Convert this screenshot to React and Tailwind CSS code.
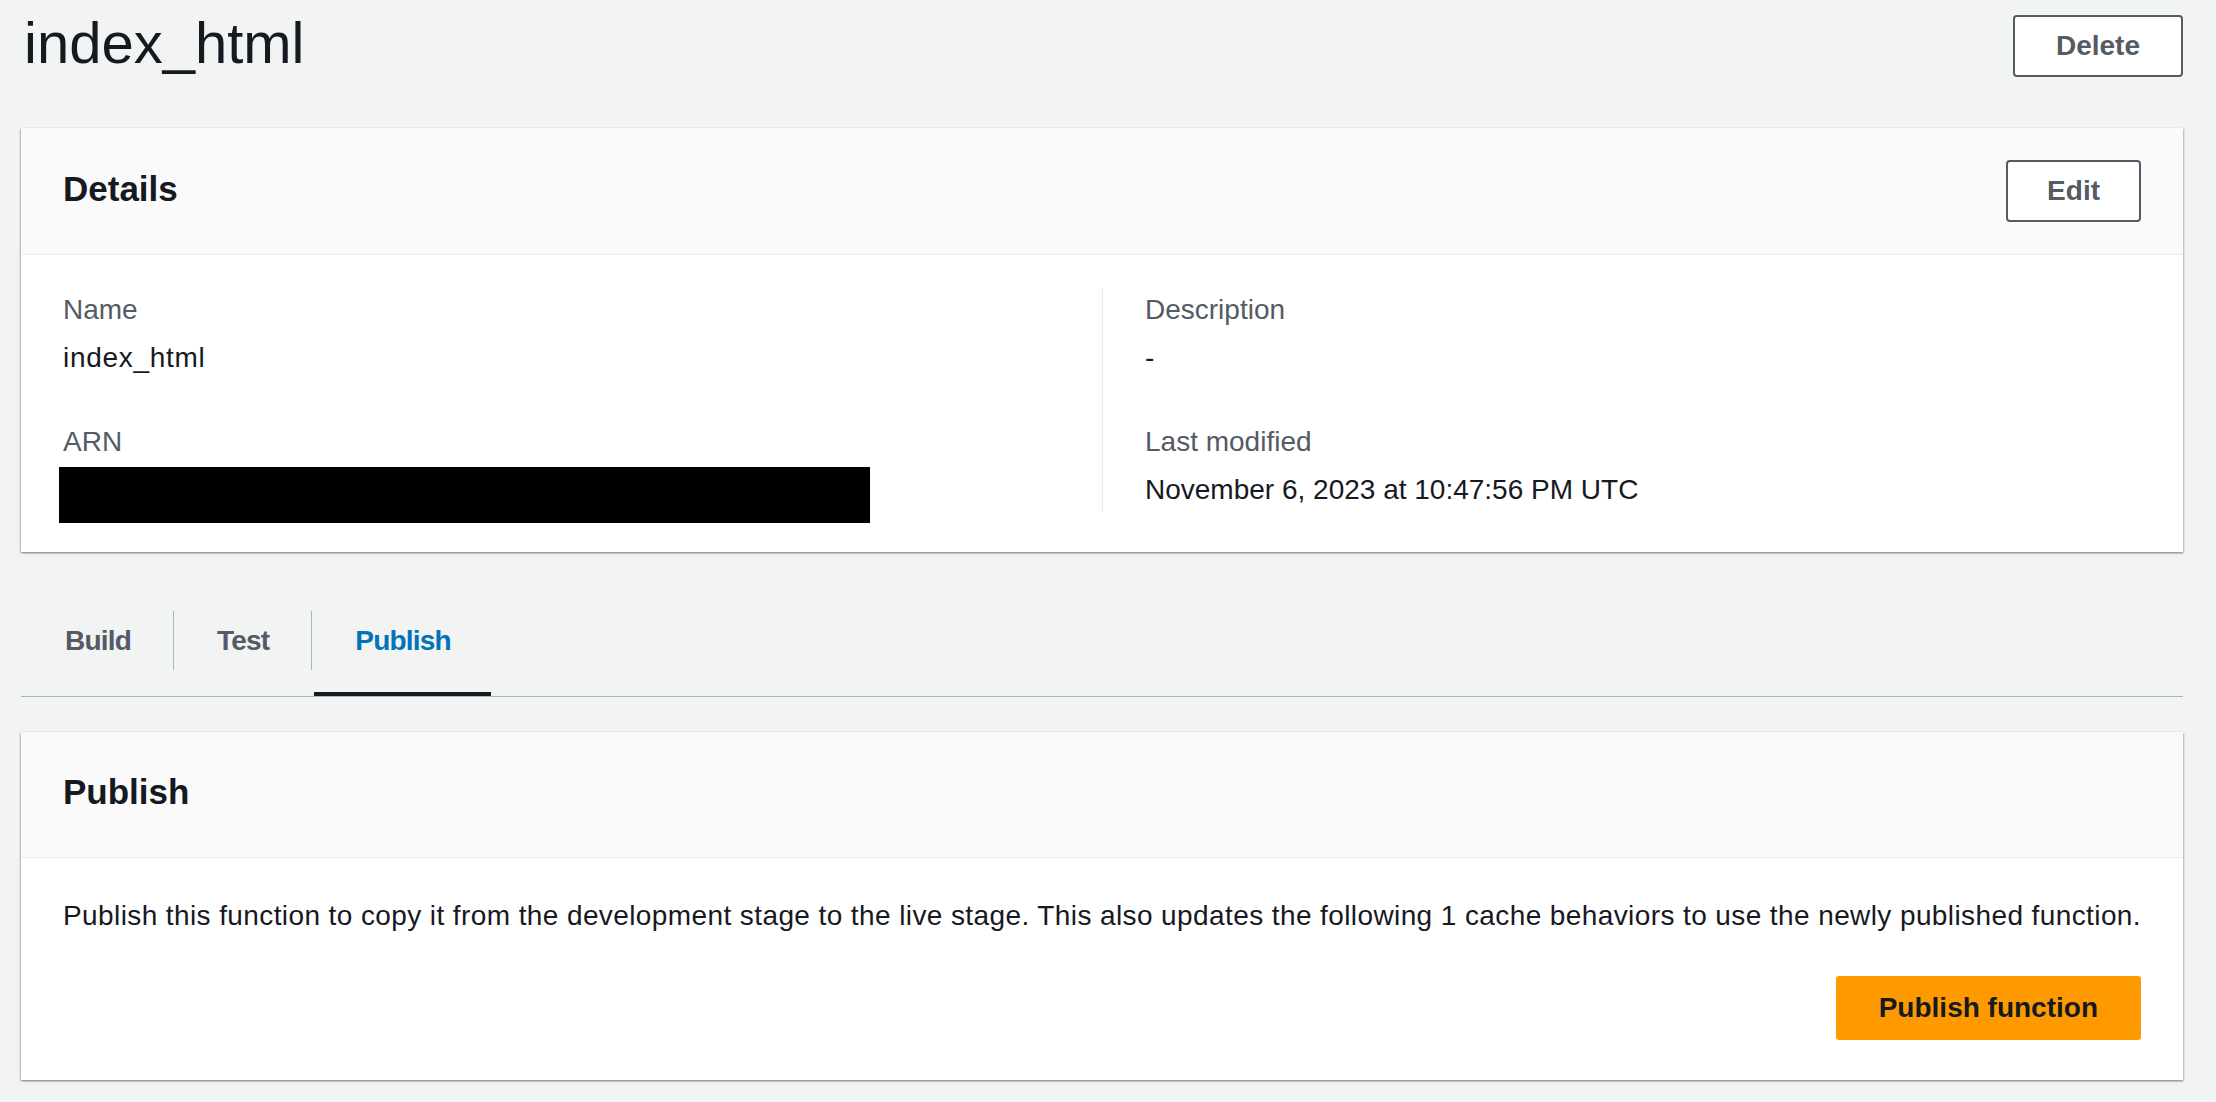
import React from "react";

function OutlineButton({ children, px = "px-[40px]" }) {
  return (
    <button className={`h-[62px] ${px} rounded-[4px] border-2 border-[#545b64] bg-white text-[28px] font-bold text-[#545b64] leading-none`}>
      {children}
    </button>
  );
}

function Field({ label, children }) {
  return (
    <div>
      <div className="text-[28px] leading-[40px] text-[#545b64]">{label}</div>
      {children}
    </div>
  );
}

export default function App() {
  return (
    <div className="min-h-screen bg-[#f2f3f3] pl-[21px] pr-[33px] font-['Liberation_Sans',Arial,sans-serif] text-[#16191f]">
      {/* Page header */}
      <div className="flex items-start justify-between">
        <h1 className="pt-[8px] pl-[3px] text-[58px] leading-[70px] font-normal text-[#16191f]">index_html</h1>
        <div className="mt-[15px]">
          <OutlineButton px="px-[41px]">Delete</OutlineButton>
        </div>
      </div>

      {/* Details card */}
      <div className="mt-[50px] bg-white shadow-[0_1px_2px_0_rgba(0,28,36,0.35),1px_1px_2px_0_rgba(0,28,36,0.15),-1px_1px_2px_0_rgba(0,28,36,0.15)]">
        <div className="h-[127px] flex items-center justify-between px-[42px] bg-[#fafafa] border-b border-[#eaeded]">
          <h2 className="-mt-[5px] text-[35px] leading-[50px] font-bold">Details</h2>
          <OutlineButton px="px-[39px]">Edit</OutlineButton>
        </div>
        <div className="grid grid-cols-2 px-[42px] pt-[35px] pb-[29px]">
          <div className="flex flex-col">
            <Field label="Name">
              <div className="mt-[8px] text-[28px] leading-[40px] tracking-[0.7px]">index_html</div>
            </Field>
            <div className="mt-[44px]">
              <div className="text-[28px] leading-[40px] text-[#545b64]">ARN</div>
              <div className="mt-[5px] -ml-[4px] h-[56px] w-[811px] bg-black" />
            </div>
          </div>
          <div className="self-start -mt-[2px] pt-[2px] pb-[2px] border-l border-[#eaeded] pl-[42px]">
            <Field label="Description">
              <div className="mt-[8px] text-[28px] leading-[40px]">-</div>
            </Field>
            <div className="mt-[44px]">
              <Field label="Last modified">
                <div className="mt-[8px] text-[28px] leading-[40px]">November 6, 2023 at 10:47:56 PM UTC</div>
              </Field>
            </div>
          </div>
        </div>
      </div>

      {/* Tabs */}
      <div className="mt-[32px] flex border-b border-[#aab7b8]">
        <div className="h-[112px] flex flex-col">
          <div className="flex-1 flex items-center pt-[6px] pl-[44px] pr-[42px] text-[28px] font-bold tracking-[-0.8px] text-[#545b64]">Build</div>
          <div className="h-[4px]" />
        </div>
        <div className="self-center w-px h-[59px] bg-[#aab7b8]" />
        <div className="h-[112px] flex flex-col">
          <div className="flex-1 flex items-center pt-[6px] pl-[43px] pr-[42px] text-[28px] font-bold tracking-[-0.8px] text-[#545b64]">Test</div>
          <div className="h-[4px]" />
        </div>
        <div className="self-center w-px h-[59px] bg-[#aab7b8]" />
        <div className="h-[112px] flex flex-col">
          <div className="flex-1 flex items-center pt-[6px] pl-[43px] pr-[42px] text-[28px] font-bold tracking-[-0.8px] text-[#0073bb]">Publish</div>
          <div className="h-[4px] mx-[2px] bg-[#16191f]" />
        </div>
      </div>

      {/* Publish card */}
      <div className="mt-[35px] bg-white shadow-[0_1px_2px_0_rgba(0,28,36,0.35),1px_1px_2px_0_rgba(0,28,36,0.15),-1px_1px_2px_0_rgba(0,28,36,0.15)]">
        <div className="h-[126px] flex items-center px-[42px] bg-[#fafafa] border-b border-[#eaeded]">
          <h2 className="-mt-[5px] text-[35px] leading-[50px] font-bold">Publish</h2>
        </div>
        <div className="px-[42px] pt-[38px] pb-[40px]">
          <p className="text-[28px] leading-[40px] tracking-[0.4px] whitespace-nowrap">
            Publish this function to copy it from the development stage to the live stage. This also updates the following 1 cache behaviors to use the newly published function.
          </p>
          <div className="mt-[40px] flex justify-end">
            <button className="h-[64px] px-[43px] rounded-[3px] bg-[#ff9900] text-[28px] font-bold text-[#16191f] leading-none">
              Publish function
            </button>
          </div>
        </div>
      </div>
    </div>
  );
}
